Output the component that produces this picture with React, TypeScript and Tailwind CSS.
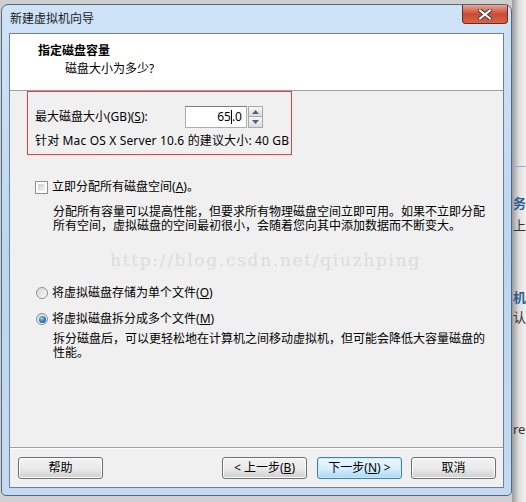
import React from "react"

const FONT = "font-['Noto_Sans','Noto_Sans_CJK_SC',sans-serif]"

function Key({ k }: { k: string }) {
  return (
    <>
      (<span className="underline underline-offset-[1px]">{k}</span>)
    </>
  )
}

function WinButton({ children, primary }: { children: React.ReactNode; primary?: boolean }) {
  return (
    <div
      className={
        primary
          ? "w-[85px] h-[22px] rounded-[3px] border border-[#3c7fb1] bg-gradient-to-b from-[#eaf6fd] via-[#d9f0fc] to-[#a7d9f5] shadow-[inset_0_0_0_1px_#c8ebff] flex items-center justify-center text-[12px] leading-none text-black"
          : "w-[85px] h-[22px] rounded-[3px] border border-[#707070] bg-gradient-to-b from-[#f2f2f2] via-[#ebebeb] to-[#cfcfcf] shadow-[inset_0_0_0_1px_#fcfcfc] flex items-center justify-center text-[12px] leading-none text-black"
      }
    >
      {children}
    </div>
  )
}

function Radio({ checked }: { checked?: boolean }) {
  return (
    <div className="w-[12px] h-[12px] rounded-full border border-[#8e8f8f] bg-gradient-to-br from-[#d6d6d6] to-[#fbfbfb] flex items-center justify-center shrink-0">
      {checked && (
        <div className="w-[7px] h-[7px] rounded-full bg-[radial-gradient(circle_at_40%_35%,#8fd3ff,#1a6fb6_60%,#0b3f7a)]" />
      )}
    </div>
  )
}

export default function App() {
  return (
    <div className={`w-[526px] h-[502px] flex overflow-hidden bg-[#cfcfcf] ${FONT} text-black`}>
      {/* Wizard window */}
      <div className="w-[512px] shrink-0 pt-[4px] pl-[1px]">
        <div className="h-[492px] rounded-t-[7px] rounded-b-[5px] border border-[#55687e] bg-gradient-to-b from-[#cfe3f7] via-[#bcd6f1] to-[#c3daf2] flex flex-col px-[7px] pb-[7px]">
          {/* Title bar */}
          <div className="h-[28px] flex items-start justify-between">
            <div className="pl-[1px] pt-[7px] text-[12px] leading-[14px] text-[#1a1a1a]">新建虚拟机向导</div>
            <div className="mr-[-4px] w-[46px] h-[19px] rounded-b-[4px] border border-t-0 border-[#6f2a20] bg-gradient-to-b from-[#e8a493] via-[#c94a32] to-[#d9644a] flex items-center justify-center">
              <svg width="14" height="11" viewBox="0 0 14 11">
                <path d="M2 1.5 L12 9.5 M12 1.5 L2 9.5" stroke="#3b3b3b" strokeWidth="4" strokeLinecap="square" />
                <path d="M2 1.5 L12 9.5 M12 1.5 L2 9.5" stroke="#ffffff" strokeWidth="2" strokeLinecap="square" />
              </svg>
            </div>
          </div>

          {/* Client area */}
          <div className="flex-1 border border-[#6e8195] bg-[#f0f0f0] flex flex-col">
            {/* Header */}
            <div className="h-[57px] bg-white border-b border-[#a0a0a0] pt-[10px]">
              <div className="pl-[28px] text-[12px] leading-[14px] font-bold">指定磁盘容量</div>
              <div className="pl-[55px] mt-[4px] text-[12px] leading-[14px]">磁盘大小为多少?</div>
            </div>

            {/* Body */}
            <div className="flex-1 text-[12px] leading-[14px]">
              <div className="ml-[17px] w-[265px] h-[64px] border border-[#f03c3c] pt-[14px] pl-[7px]">
                <div className="flex items-center">
                  <div className="w-[150px]">
                    最大磁盘大小(GB)<Key k="S" />:
                  </div>
                  <div className="w-[62px] h-[22px] border border-[#abadb3] border-t-[#7a7d84] bg-white flex items-center justify-end pr-[4px]">
                    65<span className="inline-block w-[1px] h-[14px] bg-black" />.0
                  </div>
                  <div className="ml-[1px] w-[15px] h-[22px] flex flex-col">
                    <div className="h-[11px] border border-[#a9a9a9] bg-gradient-to-b from-[#f7f7f7] to-[#dcdcdc] flex items-center justify-center">
                      <svg width="7" height="4" viewBox="0 0 7 4"><path d="M0 4 L3.5 0 L7 4 Z" fill="#4d6185" /></svg>
                    </div>
                    <div className="h-[11px] border border-t-0 border-[#a9a9a9] bg-gradient-to-b from-[#f7f7f7] to-[#dcdcdc] flex items-center justify-center">
                      <svg width="7" height="4" viewBox="0 0 7 4"><path d="M0 0 L3.5 4 L7 0 Z" fill="#4d6185" /></svg>
                    </div>
                  </div>
                </div>
                <div className="mt-[6px] tracking-[0.15px]">针对 Mac OS X Server 10.6 的建议大小: 40 GB</div>
              </div>

              <div className="mt-[25px] ml-[25px] flex items-center gap-[4px]">
                <div className="w-[13px] h-[13px] border border-[#8e8f8f] bg-white p-[2px]">
                  <div className="w-full h-full bg-gradient-to-br from-[#cbcfd5] to-[#f6f6f6]" />
                </div>
                <div>
                  立即分配所有磁盘空间<Key k="A" />。
                </div>
              </div>
              <div className="mt-[11px] ml-[43px] leading-[14px] whitespace-nowrap">
                分配所有容量可以提高性能，但要求所有物理磁盘空间立即可用。如果不立即分配
                <br />
                所有空间，虚拟磁盘的空间最初很小，会随着您向其中添加数据而不断变大。
              </div>

              <div className="mt-[16px] ml-[100px] font-['DejaVu_Serif',serif] text-[17px] leading-[22px] tracking-[1.7px] text-[#dcdcdc] whitespace-nowrap">
                http://blog.csdn.net/qiuzhping
              </div>

              <div className="mt-[15px] ml-[26px] flex items-center gap-[4px]">
                <Radio />
                <div>
                  将虚拟磁盘存储为单个文件<Key k="O" />
                </div>
              </div>
              <div className="mt-[12px] ml-[26px] flex items-center gap-[4px]">
                <Radio checked />
                <div>
                  将虚拟磁盘拆分成多个文件<Key k="M" />
                </div>
              </div>
              <div className="mt-[6px] ml-[43px] leading-[14px] whitespace-nowrap">
                拆分磁盘后，可以更轻松地在计算机之间移动虚拟机，但可能会降低大容量磁盘的
                <br />
                性能。
              </div>
            </div>

            {/* Footer */}
            <div className="h-[40px] border-t border-[#a0a0a0] shadow-[inset_0_1px_0_#ffffff] pt-[9px] pl-[8px] pr-[7px] flex">
              <WinButton>帮助</WinButton>
              <div className="flex-1" />
              <WinButton>
                &lt; 上一步<Key k="B" />
              </WinButton>
              <div className="w-[10px]" />
              <WinButton primary>
                下一步<Key k="N" /> &gt;
              </WinButton>
              <div className="w-[9px]" />
              <WinButton>取消</WinButton>
            </div>
          </div>
        </div>
      </div>

      {/* Background page peeking out at the right */}
      <div className="flex-1 bg-gradient-to-r from-[#9c9c9c] via-[#dedede] to-[#f2f2f2] text-[13px] leading-[16px] pt-[166px] pl-[1px] overflow-hidden whitespace-nowrap">
        <div className="h-[1px] bg-[#8fb0cf] mb-[28px]" />
        <div className="text-[#2c5d8f] font-bold">务</div>
        <div className="mt-[6px] text-[#333]">上</div>
        <div className="mt-[56px] text-[#2c5d8f] font-bold">机</div>
        <div className="mt-[4px] text-[#333]">认</div>
        <div className="mt-[96px] text-[#333]">re</div>
      </div>
    </div>
  )
}
